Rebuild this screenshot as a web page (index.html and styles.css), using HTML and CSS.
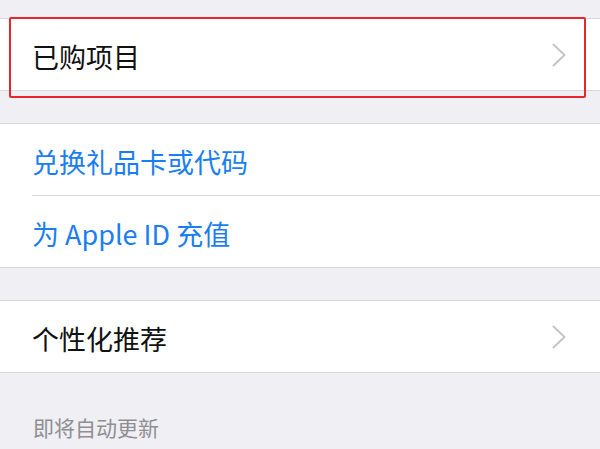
FILE: index.html
```html
<!DOCTYPE html>
<html lang="zh-CN">
<head>
    <meta charset="UTF-8">
    <meta name="viewport" content="width=device-width, initial-scale=1.0">
    <title>账户</title>
    <link rel="stylesheet" href="styles.css">
</head>
<body>
    <div class="group first">
        <div class="row">
            <span class="label">已购项目</span>
            <svg class="chevron" width="14" height="24" viewBox="0 0 14 24">
                <polyline points="1.5,1.5 12.5,12 1.5,22.5" fill="none" stroke="#c4c4c9" stroke-width="2" stroke-linecap="round" stroke-linejoin="round"/>
            </svg>
        </div>
        <div class="highlight"></div>
    </div>

    <div class="group">
        <div class="row">
            <span class="label link">兑换礼品卡或代码</span>
        </div>
        <div class="row">
            <span class="label link">为 Apple ID 充值</span>
        </div>
    </div>

    <div class="group">
        <div class="row">
            <span class="label">个性化推荐</span>
            <svg class="chevron" width="14" height="24" viewBox="0 0 14 24">
                <polyline points="1.5,1.5 12.5,12 1.5,22.5" fill="none" stroke="#c4c4c9" stroke-width="2" stroke-linecap="round" stroke-linejoin="round"/>
            </svg>
        </div>
    </div>

    <div class="section-title">即将自动更新</div>
</body>
</html>
```

FILE: styles.css
```css
body {
    margin: 0;
    background-color: #efeff4;
    font-family: "Noto Sans CJK SC", "Noto Sans", sans-serif;
    overflow: hidden;
}

.group {
    position: relative;
    background-color: #fff;
    border-top: 1px solid #d8d8dc;
    border-bottom: 1px solid #d8d8dc;
    margin-top: 32px;
}

.group.first {
    margin-top: 18px;
}

.row {
    height: 71px;
    display: flex;
    align-items: center;
    justify-content: space-between;
    padding: 0 34px 0 32px;
}

.row + .row {
    border-top: 1px solid #d8d8dc;
    margin-left: 32px;
    padding-left: 0;
}

.label {
    font-size: 27px;
    color: #111;
    line-height: 1;
    padding-top: 4px;
}

.label.link {
    color: #1a7ef0;
}

.chevron {
    display: block;
}

.highlight {
    position: absolute;
    top: -2px;
    left: 9px;
    right: 14px;
    height: 77px;
    border: 2px solid #e8262b;
    border-radius: 2px;
}

.section-title {
    padding: 42px 0 0 33px;
    font-size: 21px;
    line-height: 24px;
    color: #8e8e93;
}
```
